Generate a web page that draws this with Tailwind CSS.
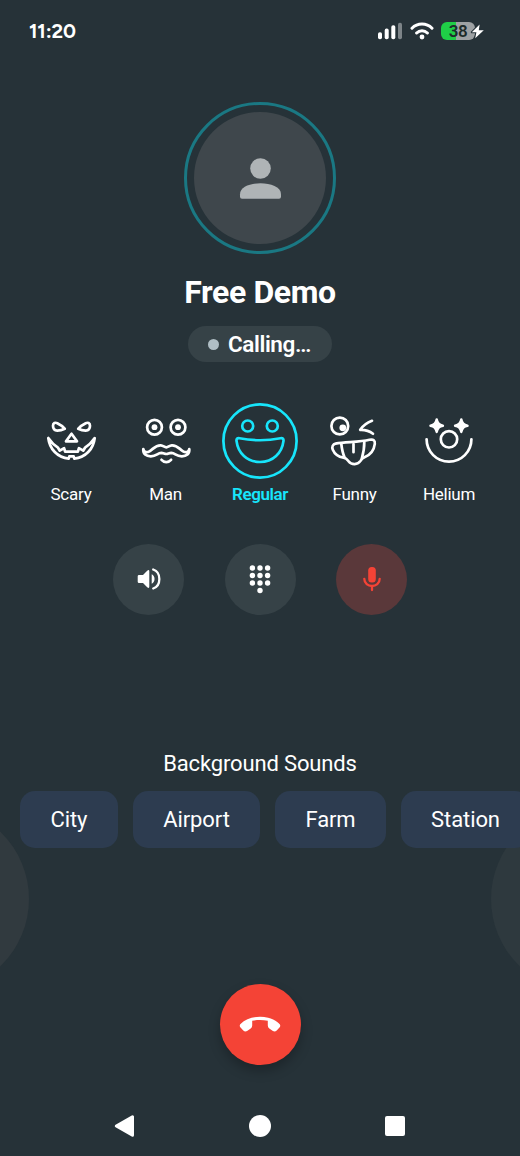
<!DOCTYPE html>
<html lang="en">
<head>
<meta charset="utf-8">
<title>Call</title>
<script src="https://cdn.jsdelivr.net/npm/@tailwindcss/browser@4"></script>
</head>
<body class="bg-[#263238]">
<main class="relative isolate flex h-[1156px] w-[520px] flex-col overflow-hidden bg-[#263238] font-['Roboto',sans-serif] text-white">
  <!-- faint decorative discs -->
  <div class="absolute top-[806px] -left-[157px] -z-10 size-[186px] rounded-full bg-[#313a3f]"></div>
  <div class="absolute top-[806px] -right-[157px] -z-10 size-[186px] rounded-full bg-[#2e393e]"></div>

  <header class="flex h-[62px] items-center justify-between pr-[35px] pl-[29px]">
    <span class="font-['Figtree','Lato',sans-serif] text-[20px] leading-none font-bold tracking-[-0.1px]">11:20</span>
    <div class="flex items-center">
      <svg class="h-[18px] w-[25px]" viewBox="0 0 25 18" fill="#fff"><rect x="0" y="10.3" width="4" height="7" rx="1.8"/><rect x="6.7" y="6.6" width="4" height="10.7" rx="1.8"/><rect x="13.3" y="3.2" width="4" height="14.1" rx="1.8"/><rect x="20" y="0.7" width="4" height="16.6" rx="1.8" fill="#7d8488"/></svg>
      <svg class="ml-[7px] h-[18px] w-[24px]" viewBox="0 0 24 18" fill="none" stroke="#fff" stroke-width="3" stroke-linecap="round"><path d="M2 6.2C7.5.6 16.5.6 22 6.2M6.6 11c3-3 7.8-3 10.8 0"/><circle cx="12" cy="15" r="2.4" fill="#fff" stroke="none"/></svg>
      <div class="relative ml-[7px] flex h-[18px] w-[44px] items-center">
        <div class="flex h-[18px] w-[34px] items-center justify-center rounded-[6px] bg-linear-to-r from-[#1fce47] from-[43%] to-[#9da1a3] to-[43%] font-['Roboto'] text-[17px] leading-none font-semibold tracking-[-0.4px] text-[#1d2b29]"><span>38</span></div>
        <svg class="absolute top-0 right-0 h-[18px] w-[15px]" viewBox="0 0 15 18"><path d="M9.6 2.500 1.800 10.300h4.600l-1.200 6L13.800 8.200H8.800z" fill="#fff" stroke="#263238" stroke-width="2" stroke-linejoin="round" paint-order="stroke"/></svg>
      </div>
    </div>
  </header>

  <section class="mt-[40px] flex flex-col items-center">
    <div class="flex size-[152px] items-center justify-center rounded-full border-[3px] border-[#1a7883]">
      <div class="flex size-[132px] items-center justify-center rounded-full bg-[#3f474c]">
        <svg class="size-[42px]" viewBox="-0.500 -0.800 42 42" fill="#afb4b6"><circle cx="21" cy="10.700" r="10.300"/><path d="M.5 36.500C.5 29 11 25.500 21 25.500s20.500 3.500 20.500 11v2.500q0 2-2 2h-37q-2 0-2-2z"/></svg>
      </div>
    </div>
    <h1 class="mt-[18px] text-[32px] leading-[40px] font-bold tracking-[-0.4px]">Free Demo</h1>
    <div class="mt-[14px] flex h-[36px] w-[144px] items-center rounded-full bg-[#364247] pl-[20px]">
      <span class="mr-[9px] size-[11px] rounded-full bg-[#b0bec5]"></span>
      <span class="text-[22.500px] leading-none font-semibold tracking-[-0.400px]">Calling…</span>
    </div>
  </section>

  <section class="mt-[41px] grid grid-cols-[repeat(5,94.5px)] justify-center text-center text-[17px] leading-[20px] tracking-[-0.250px]">
    <div class="flex flex-col items-center gap-[5px]">
      <svg class="size-[76px]" viewBox="0 0 76 76" fill="none" stroke="#fff" stroke-width="2.700" stroke-linejoin="round" stroke-linecap="round"><path d="M20 22.800c0-2.800 2.300-3.600 4.300-2.600 2.700 1.300 5.700 3 7.500 5.600-2.500 1.200-5 1.800-7.500 1.800-2.500-.1-4.300-2-4.300-4.800zM57 22.800c0-2.800-2.300-3.600-4.300-2.600-2.700 1.300-5.700 3-7.500 5.600 2.500 1.200 5 1.800 7.500 1.800 2.500-.1 4.300-2 4.300-4.800z"/><path d="M38.500 30.800 33 38.300h11z"/><path d="M15.300 35C16.500 46 24.500 54.500 35.700 55.600l.6-2.300h4.400l.6 2.300C52.500 54.500 60.500 46 61.700 35c-3 4.300-6 7.400-9.700 9.700l-1.800 3-4.300-2.500-1 3.500H32.100l-1-3.500-4.300 2.500-1.800-3c-3.700-2.300-6.700-5.400-9.700-9.700z"/></svg>
      <span>Scary</span>
    </div>
    <div class="flex flex-col items-center gap-[5px]">
      <svg class="size-[76px]" viewBox="0 0 76 76" fill="none" stroke="#fff" stroke-width="2.700" stroke-linejoin="round" stroke-linecap="round"><circle cx="26.500" cy="24.200" r="7.400"/><circle cx="50" cy="24.200" r="7.400"/><circle cx="26.500" cy="24.200" r="2.900" fill="#fff" stroke="none"/><circle cx="50" cy="24.200" r="2.900" fill="#fff" stroke="none"/><path d="M15.300 46c.5 3.300 3.500 4 6.200 2.300 3.800-2.300 6-6.300 11.300-6 2.500.2 3.500 2.100 5.500 2.100s3-1.900 5.500-2.100c5.300-.3 7.500 3.700 11.300 6 2.700 1.700 5.700 1 6.200-2.300.4 5-2.800 7.300-7.500 7.300-6 0-6.500-3.300-10.500-3.400-2.200 0-3.200 1.100-5 1.100s-2.800-1.100-5-1.100c-4 .1-4.500 3.400-10.500 3.400-4.700 0-7.900-2.300-7.500-7.300z"/><path d="M33.500 56.800c2.700 3 6.900 3 9.600 0"/></svg>
      <span>Man</span>
    </div>
    <div class="flex flex-col items-center gap-[5px] font-medium text-[#17e5fb]">
      <svg class="size-[76px]" viewBox="0 0 76 76" fill="none" stroke="#17e5fb" stroke-width="2.700" stroke-linejoin="round"><circle cx="38" cy="38" r="36.600"/><circle cx="25.700" cy="23" r="5.500"/><circle cx="50.300" cy="23" r="5.500"/><path d="M17.500 35.200c13 2.600 28 2.600 41 0 2-.4 3.200.6 3 2.600C60 50 51 59 38 59S16 50 14.500 37.800c-.2-2 1-3 3-2.600z"/></svg>
      <span class="font-semibold tracking-[-0.400px]">Regular</span>
    </div>
    <div class="flex flex-col items-center gap-[5px]">
      <svg class="size-[76px]" viewBox="0 0 76 76" fill="none" stroke="#fff" stroke-width="2.700" stroke-linejoin="round" stroke-linecap="round"><circle cx="22.800" cy="23" r="8.400"/><circle cx="25.800" cy="24.800" r="3.400" fill="#fff" stroke="none"/><path d="M55 17.800C50.500 19.500 46.500 22 43.200 26.800c4.800-.2 8.800.8 12.800 3.900"/><path d="M18.500 40.700C30 38.900 42 39.300 52.500 36.800c4-.8 5.700.7 5.300 4C57 47.500 53 52 47.500 54.200c-2.500 1-2.700 1.500-4 3.700-2.500 4-9 4.300-12 .3-1.500-2-2-3-5-3.500C21 53.700 17.500 50.700 15.800 46.700c-1.300-3 .2-5.600 2.700-6z"/><path d="M24.300 41c.6 5 1.500 9.500 3.300 13.500M47.300 39c.1 6-.8 10.500-2.500 16.500M36.500 41v8.200"/></svg>
      <span>Funny</span>
    </div>
    <div class="flex flex-col items-center gap-[5px]">
      <svg class="size-[76px]" viewBox="0 0 76 76" fill="none" stroke="#fff" stroke-width="2.700" stroke-linejoin="round" stroke-linecap="round"><path d="M25.700 16.500c.6 4 2.200 5.600 6.200 6.200-4 .6-5.600 2.200-6.200 6.200-.6-4-2.200-5.600-6.200-6.200 4-.6 5.600-2.200 6.200-6.200zM50.300 16.500c.6 4 2.200 5.600 6.200 6.200-4 .6-5.600 2.200-6.200 6.200-.6-4-2.200-5.600-6.200-6.200 4-.6 5.600-2.200 6.200-6.200z" fill="#fff" stroke-width="2.500"/><circle cx="38" cy="36.300" r="8.200"/><path d="M15.600 36.300a22.400 22.400 0 0 0 44.800 0"/></svg>
      <span>Helium</span>
    </div>
  </section>

  <section class="mt-[39.500px] flex justify-center gap-[40.500px]">
    <div class="flex size-[71px] items-center justify-center rounded-full bg-[#364247]">
      <svg class="size-[24px]" viewBox="0 0 24 24" fill="#fff"><path d="M2 8h4l4.200-4.200Q12.300 2 12.300 4.500v15q0 2.500-2.100.7L6 16H2Q.7 16 .7 14.700V9.300Q.7 8 2 8zM14.700 7.200c3.800 1.800 3.800 7.800 0 9.600z"/><path d="M16.200 2.500c8.200 2.700 8.200 16.300 0 19" fill="none" stroke="#fff" stroke-width="2.300" stroke-linecap="round"/></svg>
    </div>
    <div class="flex size-[71px] items-center justify-center rounded-full bg-[#364247]">
      <svg class="h-[30px] w-[22px]" viewBox="0 0 22 30" fill="#fff"><circle cx="3.400" cy="4" r="2.700"/><circle cx="11" cy="4" r="2.700"/><circle cx="18.600" cy="4" r="2.700"/><circle cx="3.400" cy="11.500" r="2.700"/><circle cx="11" cy="11.500" r="2.700"/><circle cx="18.600" cy="11.500" r="2.700"/><circle cx="3.400" cy="19" r="2.700"/><circle cx="11" cy="19" r="2.700"/><circle cx="18.600" cy="19" r="2.700"/><circle cx="11" cy="26.500" r="2.700"/></svg>
    </div>
    <div class="flex size-[71px] items-center justify-center rounded-full bg-[#5a383a]">
      <svg class="h-[26px] w-[18px]" viewBox="0 0 18 26" fill="#f44336"><rect x="5.200" y="1" width="7.600" height="15.500" rx="3.500"/><path d="M1.300 12.800c0 9.600 15.400 9.600 15.400 0M9 20.300v3.800" fill="none" stroke="#f44336" stroke-width="2.300" stroke-linecap="round"/></svg>
    </div>
  </section>

  <section class="mt-[133.500px]">
    <h2 class="text-center text-[22px] leading-[31px] tracking-[-0.150px]">Background Sounds</h2>
    <div class="mt-[12px] flex gap-[15px] pl-[20px] text-[22px] leading-none tracking-[-0.100px]">
      <div class="flex h-[57px] w-[98px] shrink-0 items-center justify-center rounded-[15px] bg-[#2d3c50]">City</div>
      <div class="flex h-[57px] w-[127px] shrink-0 items-center justify-center rounded-[15px] bg-[#2d3c50]">Airport</div>
      <div class="flex h-[57px] w-[111px] shrink-0 items-center justify-center rounded-[15px] bg-[#2d3c50]">Farm</div>
      <div class="flex h-[57px] w-[129px] shrink-0 items-center justify-center rounded-[15px] bg-[#2d3c50]">Station</div>
    </div>
  </section>

  <div class="mt-[136px] flex justify-center">
    <div class="flex size-[81px] items-center justify-center rounded-full bg-[#f44336] shadow-[0_6px_12px_rgba(0,0,0,0.25)]">
      <svg class="mb-[2px] h-[16px] w-[42px]" viewBox="0 0 42 16" fill="#fff"><path d="M1.500 8C11-1.700 31-1.700 40.500 8q1.400 1.600.2 3.300l-3 3.300q-1.700 1.500-3.800.5l-3.600-2.500q-1.500-1.200-1.500-3V4.800c-5-1.100-10.600-1.100-15.600 0v4.800q0 1.800-1.500 3L8.100 15.100q-2.100 1-3.800-.5L1.300 11.300q-1.200-1.700.2-3.300z"/></svg>
    </div>
  </div>

  <nav class="mt-[49px] flex items-center justify-between pr-[115px] pl-[114px]">
    <svg class="h-[24px] w-[21px]" viewBox="0 0 21 24"><path d="M2.300 12 18.500 2.700v18.600z" fill="#fff" stroke="#fff" stroke-width="3" stroke-linejoin="round"/></svg>
    <div class="size-[22px] rounded-full bg-white"></div>
    <div class="size-[20px] rounded-[2px] bg-white"></div>
  </nav>
</main>
</body>
</html>
